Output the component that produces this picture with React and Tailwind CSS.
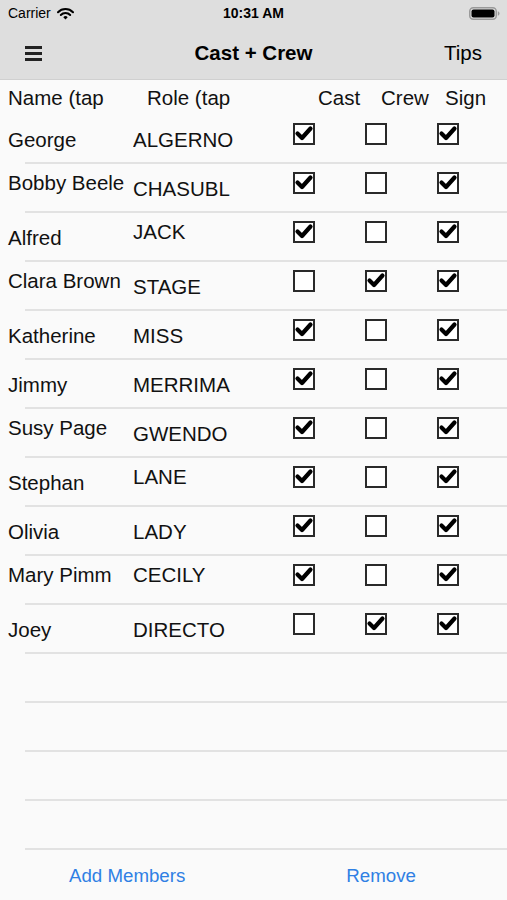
import React from "react";

// Cast list. hi = text sits higher in the row (as the reference shows)
const members = [
  { name: "George", nameHi: false, role: "ALGERNO", roleHi: false, cast: true, crew: false, sign: true },
  { name: "Bobby Beele", nameHi: true, role: "CHASUBL", roleHi: false, cast: true, crew: false, sign: true },
  { name: "Alfred", nameHi: false, role: "JACK", roleHi: true, cast: true, crew: false, sign: true },
  { name: "Clara Brown", nameHi: true, role: "STAGE", roleHi: false, cast: false, crew: true, sign: true },
  { name: "Katherine", nameHi: false, role: "MISS", roleHi: false, cast: true, crew: false, sign: true },
  { name: "Jimmy", nameHi: false, role: "MERRIMA", roleHi: false, cast: true, crew: false, sign: true },
  { name: "Susy Page", nameHi: true, role: "GWENDO", roleHi: false, cast: true, crew: false, sign: true },
  { name: "Stephan", nameHi: false, role: "LANE", roleHi: true, cast: true, crew: false, sign: true },
  { name: "Olivia", nameHi: false, role: "LADY", roleHi: false, cast: true, crew: false, sign: true },
  { name: "Mary Pimm", nameHi: true, role: "CECILY", roleHi: true, cast: true, crew: false, sign: true },
  { name: "Joey", nameHi: false, role: "DIRECTO", roleHi: false, cast: false, crew: true, sign: true },
];

function Checkbox({ checked }) {
  return (
    <svg width="22" height="22" viewBox="0 0 22 22" className="shrink-0">
      <rect x="1" y="1" width="20" height="20" fill="#fff" stroke="#2a2a2a" strokeWidth="2" />
      {checked && (
        <path
          d="M4.5 10.5 L9 15 L17.5 5.5"
          fill="none"
          stroke="#000"
          strokeWidth="4.2"
          strokeLinecap="round"
          strokeLinejoin="round"
        />
      )}
    </svg>
  );
}

function Wifi() {
  return (
    <svg width="17" height="12" viewBox="0 0 17 12">
      <path d="M1 4.2 A10.5 10.5 0 0 1 16 4.2" fill="none" stroke="#000" strokeWidth="2" strokeLinecap="round" />
      <path d="M3.8 7 A6.5 6.5 0 0 1 13.2 7" fill="none" stroke="#000" strokeWidth="2" strokeLinecap="round" />
      <path d="M8.5 11.5 L6.3 9.3 A3 3 0 0 1 10.7 9.3 Z" fill="#000" />
    </svg>
  );
}

function Battery() {
  return (
    <svg width="31" height="13" viewBox="0 0 31 13">
      <rect x="0.75" y="0.75" width="26.5" height="11.5" rx="3.5" fill="none" stroke="#9a9a9a" strokeWidth="1.5" />
      <rect x="2.5" y="2.5" width="23" height="8" rx="2" fill="#000" />
      <path d="M28.8 4.3 Q30.5 4.6 30.5 6.5 Q30.5 8.4 28.8 8.7 Z" fill="#9a9a9a" />
    </svg>
  );
}

export default function App() {
  return (
    <div
      className="w-[507px] h-[900px] flex flex-col bg-[#fafafa] text-[#111] overflow-hidden"
      style={{ fontFamily: '"Liberation Sans", Arial, sans-serif' }}
    >
      {/* Status + navigation bar */}
      <div className="bg-[#dedede] border-b border-[#d0d0d0] h-[80px] shrink-0">
        <div className="h-[27px] flex items-center justify-between pl-2 pr-[7px] relative">
          <div className="flex items-center gap-[6px] text-[14px] text-black">
            <span>Carrier</span>
            <Wifi />
          </div>
          <span className="absolute left-1/2 -translate-x-1/2 text-[14px] font-bold text-black">10:31 AM</span>
          <Battery />
        </div>
        <div className="h-[52px] flex items-center relative">
          <div className="flex flex-col gap-[3px] ml-[25px]">
            <div className="w-[17px] h-[3px] bg-[#222]" />
            <div className="w-[17px] h-[3px] bg-[#222]" />
            <div className="w-[17px] h-[3px] bg-[#222]" />
          </div>
          <span className="absolute left-1/2 -translate-x-1/2 text-[20.5px] font-bold text-black">Cast + Crew</span>
          <span className="ml-auto mr-[25px] text-[20.5px] text-black">Tips</span>
        </div>
      </div>

      {/* Column headings */}
      <div className="h-[35px] shrink-0 flex items-center text-[20.5px] leading-[24px] pt-[1px]">
        <span className="w-[147px] pl-2">Name (tap</span>
        <span className="w-[171px]">Role (tap</span>
        <span className="w-[63px]">Cast</span>
        <span className="w-[64px]">Crew</span>
        <span>Sign</span>
      </div>

      {/* Members list */}
      <div className="flex-1 overflow-hidden">
        {members.map((m) => (
          <div key={m.name} className="h-[49px] flex flex-col">
            <div className="flex-1 flex items-start text-[20.5px] leading-[24px]">
              <div className={`w-[133px] pl-2 whitespace-nowrap overflow-hidden ${m.nameHi ? "pt-[7px]" : "pt-[13px]"}`}>
                {m.name}
              </div>
              <div className={`w-[160px] whitespace-nowrap overflow-hidden ${m.roleHi ? "pt-[7px]" : "pt-[13px]"}`}>
                {m.role}
              </div>
              <div className="flex gap-[50px] pt-[8px]">
                <Checkbox checked={m.cast} />
                <Checkbox checked={m.crew} />
                <Checkbox checked={m.sign} />
              </div>
            </div>
            <div className="ml-[25px] h-[2px] bg-[#e2e2e2]" />
          </div>
        ))}
        {[0, 1, 2].map((i) => (
          <div key={i} className="h-[49px] flex flex-col">
            <div className="flex-1" />
            <div className="ml-[25px] h-[2px] bg-[#e2e2e2]" />
          </div>
        ))}
      </div>

      {/* Bottom toolbar */}
      <div className="h-[52px] shrink-0 flex items-center ml-[25px] border-t-2 border-[#e2e2e2] text-[18.7px] text-[#2f80e4] pt-[2px]">
        <span className="ml-[44px]">Add Members</span>
        <span className="ml-[161px]">Remove</span>
      </div>
    </div>
  );
}
